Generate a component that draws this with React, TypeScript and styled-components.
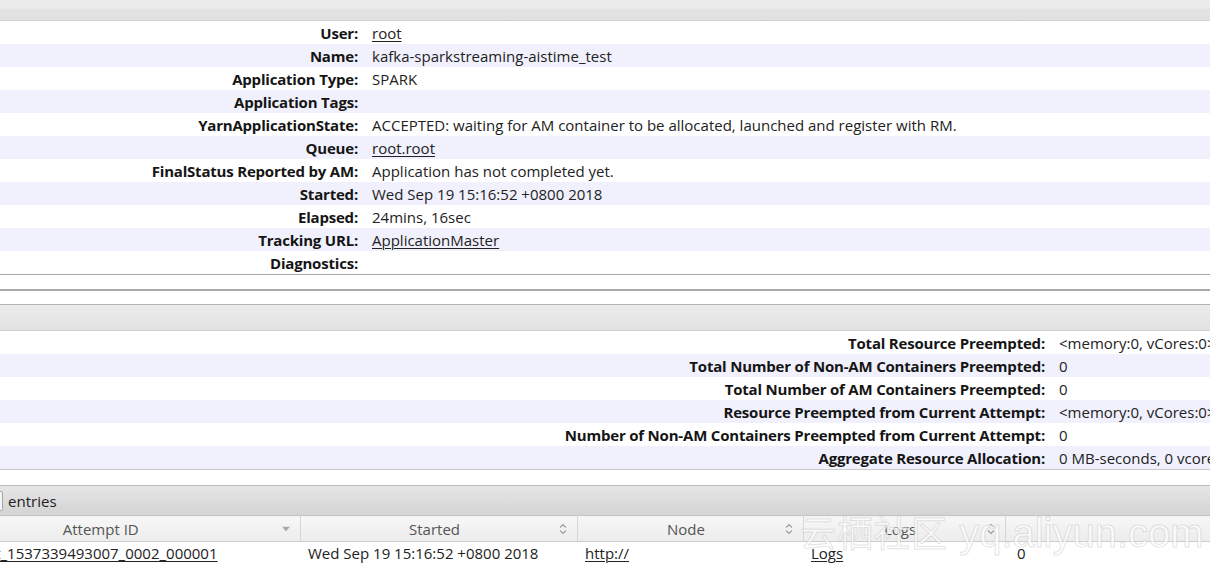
import styled, { createGlobalStyle } from "styled-components";

const GlobalStyle = createGlobalStyle`
    html, body {
        margin: 0;
        padding: 0;
        background: #ffffff;
        overflow: hidden;
    }
    body {
        font-family: "Open Sans", "Noto Sans", "Liberation Sans", sans-serif;
        font-size: 15px;
        color: #222;
    }
`;

type Item = { label: string; value?: string; link?: boolean };

const overview: Item[] = [
    { label: "User:", value: "root", link: true },
    { label: "Name:", value: "kafka-sparkstreaming-aistime_test" },
    { label: "Application Type:", value: "SPARK" },
    { label: "Application Tags:" },
    { label: "YarnApplicationState:", value: "ACCEPTED: waiting for AM container to be allocated, launched and register with RM." },
    { label: "Queue:", value: "root.root", link: true },
    { label: "FinalStatus Reported by AM:", value: "Application has not completed yet." },
    { label: "Started:", value: "Wed Sep 19 15:16:52 +0800 2018" },
    { label: "Elapsed:", value: "24mins, 16sec" },
    { label: "Tracking URL:", value: "ApplicationMaster", link: true },
    { label: "Diagnostics:" },
];

const metrics: Item[] = [
    { label: "Total Resource Preempted:", value: "<memory:0, vCores:0>" },
    { label: "Total Number of Non-AM Containers Preempted:", value: "0" },
    { label: "Total Number of AM Containers Preempted:", value: "0" },
    { label: "Resource Preempted from Current Attempt:", value: "<memory:0, vCores:0>" },
    { label: "Number of Non-AM Containers Preempted from Current Attempt:", value: "0" },
    { label: "Aggregate Resource Allocation:", value: "0 MB-seconds, 0 vcore-seconds" },
];

const columns = [
    { title: "Attempt ID", width: 390, sort: "desc" },
    { title: "Started", width: 277, sort: "both" },
    { title: "Node", width: 226, sort: "both" },
    { title: "Logs", width: 202, sort: "both" },
    { title: "Nodes blacklisted by the app", width: 700, sort: "both" },
];

function SortDesc() {
    return (
        <svg width="8" height="5" viewBox="0 0 8 5">
            <path d="M0 0 L8 0 L4 5 Z" fill="#a8a8a8" />
        </svg>
    );
}

function SortBoth() {
    return (
        <svg width="8" height="12" viewBox="0 0 8 12">
            <path d="M1 4.5 L4 1.5 L7 4.5" fill="none" stroke="#9a9a9a" strokeWidth="1.1" />
            <path d="M1 7.5 L4 10.5 L7 7.5" fill="none" stroke="#9a9a9a" strokeWidth="1.1" />
        </svg>
    );
}

function InfoTable({ items, labelWidth }: { items: Item[]; labelWidth: number }) {
    return (
        <InfoList>
            {items.map((it, i) => (
                <InfoRow key={it.label} $odd={i % 2 === 1} $labelWidth={labelWidth}>
                    <Label>{it.label}</Label>
                    <Value>{it.link ? <TextLink>{it.value}</TextLink> : it.value}</Value>
                </InfoRow>
            ))}
        </InfoList>
    );
}

export default function App() {
    return (
        <>
            <GlobalStyle />
            <Page>
                <TopBar />
                <InfoTable items={overview} labelWidth={448} />
                <EmptyPanel />
                <SectionHeader />
                <MetricsBlock>
                    <InfoTable items={metrics} labelWidth={1135} />
                </MetricsBlock>
                <EntriesBar>
                    <span>Show</span>
                    <LengthSelect>10</LengthSelect>
                    <span>entries</span>
                </EntriesBar>
                <Grid>
                    <colgroup>
                        {columns.map((c) => (
                            <col key={c.title} style={{ width: c.width }} />
                        ))}
                    </colgroup>
                    <thead>
                        <tr>
                            {columns.map((c, i) => (
                                <HeadCell key={c.title} $hidden={i === columns.length - 1}>
                                    <span>{c.title}</span>
                                    <SortIcon>{c.sort === "desc" ? <SortDesc /> : <SortBoth />}</SortIcon>
                                </HeadCell>
                            ))}
                        </tr>
                    </thead>
                    <tbody>
                        <tr>
                            <Cell><TextLink>appattempt_1537339493007_0002_000001</TextLink></Cell>
                            <Cell>Wed Sep 19 15:16:52 +0800 2018</Cell>
                            <Cell><TextLink>http://</TextLink></Cell>
                            <Cell><TextLink>Logs</TextLink></Cell>
                            <Cell $pad={12}>0</Cell>
                        </tr>
                    </tbody>
                </Grid>
                <Watermark>
                    <span className="cn">云栖社区</span> yq.aliyun.com
                </Watermark>
            </Page>
        </>
    );
}

const Page = styled.div`
    position: relative;
    width: 1795px;
    margin-left: -90px;
`;

const TopBar = styled.div`
    height: 20px;
    background: linear-gradient(#ececec 0, #ececec 8px, #e3e3e3 9px, #e1e1e1 100%);
    border-bottom: 1px solid #d2d2d2;
`;

const InfoList = styled.div`
    display: flex;
    flex-direction: column;
    border-bottom: 1px solid #a9a9a9;
`;

const InfoRow = styled.div<{ $odd: boolean; $labelWidth: number }>`
    display: grid;
    grid-template-columns: ${(p) => p.$labelWidth}px 1fr;
    height: 23px;
    align-items: center;
    background: ${(p) => (p.$odd ? "#f1f1fd" : "#ffffff")};
    white-space: nowrap;
`;

const Label = styled.div`
    text-align: right;
    font-weight: 700;
    letter-spacing: -0.2px;
    color: #151515;
`;

const Value = styled.div`
    padding-left: 14px;
    color: #222;
`;

const TextLink = styled.a`
    color: #222;
    text-decoration: underline;
    text-underline-offset: 2px;
    text-decoration-thickness: 1px;
`;

const EmptyPanel = styled.div`
    margin-top: 14px;
    height: 13px;
    border-top: 2px solid #a9a9a9;
    border-bottom: 1px solid #b4b4b4;
`;

const SectionHeader = styled.div`
    height: 25px;
    background: linear-gradient(#ececec, #e2e2e2);
    border-bottom: 1px solid #cfcfcf;
`;

const MetricsBlock = styled.div`
    & > div {
        border-bottom: 1px solid #c9c9c9;
    }
`;

const EntriesBar = styled.div`
    margin-top: 15px;
    height: 30px;
    box-sizing: border-box;
    border-top: 1px solid #b9b9b9;
    background: linear-gradient(#e6e6e6, #d9d9d9 70%, #d4d4d4);
    display: flex;
    align-items: center;
    gap: 5px;
    padding-left: 10px;
    color: #222;
`;

const LengthSelect = styled.div`
    width: 40px;
    height: 20px;
    box-sizing: border-box;
    border: 1px solid #a6a6a6;
    border-radius: 2px;
    background: #f4f4f4;
    font-size: 13px;
    line-height: 18px;
    padding-left: 4px;
`;

const Grid = styled.table`
    table-layout: fixed;
    border-collapse: collapse;
    width: 1795px;
`;

const HeadCell = styled.th<{ $hidden?: boolean }>`
    position: relative;
    height: 25px;
    padding: 0 18px 0 10px;
    font-weight: 400;
    color: #555;
    text-align: center;
    background: linear-gradient(#f7f7f7, #ececec);
    border-top: 1px solid #c4c4c4;
    border-bottom: 1px solid #cdcdcd;
    border-right: 1px solid #d6d6d6;
    white-space: nowrap;
    & > span {
        visibility: ${(p) => (p.$hidden ? "hidden" : "visible")};
    }
`;

const SortIcon = styled.span`
    position: absolute;
    right: 10px;
    top: 50%;
    transform: translateY(-50%);
    display: flex;
    line-height: 0;
`;

const Cell = styled.td<{ $pad?: number }>`
    height: 22px;
    padding: 0 0 0 ${(p) => p.$pad ?? 8}px;
    color: #222;
    white-space: nowrap;
    overflow: hidden;
    background: #fff;
    border-bottom: 1px solid #ddd;
`;

const Watermark = styled.div`
    position: absolute;
    left: 890px;
    top: 508px;
    font-family: "Liberation Sans", Arial, sans-serif;
    font-size: 40px;
    line-height: 46px;
    color: rgba(255, 255, 255, 0.7);
    -webkit-text-stroke: 1px rgba(175, 175, 175, 0.35);
    white-space: nowrap;
    pointer-events: none;
    .cn {
        font-family: "Noto Sans CJK SC", sans-serif;
        font-size: 36px;
        letter-spacing: 1px;
    }
`;
